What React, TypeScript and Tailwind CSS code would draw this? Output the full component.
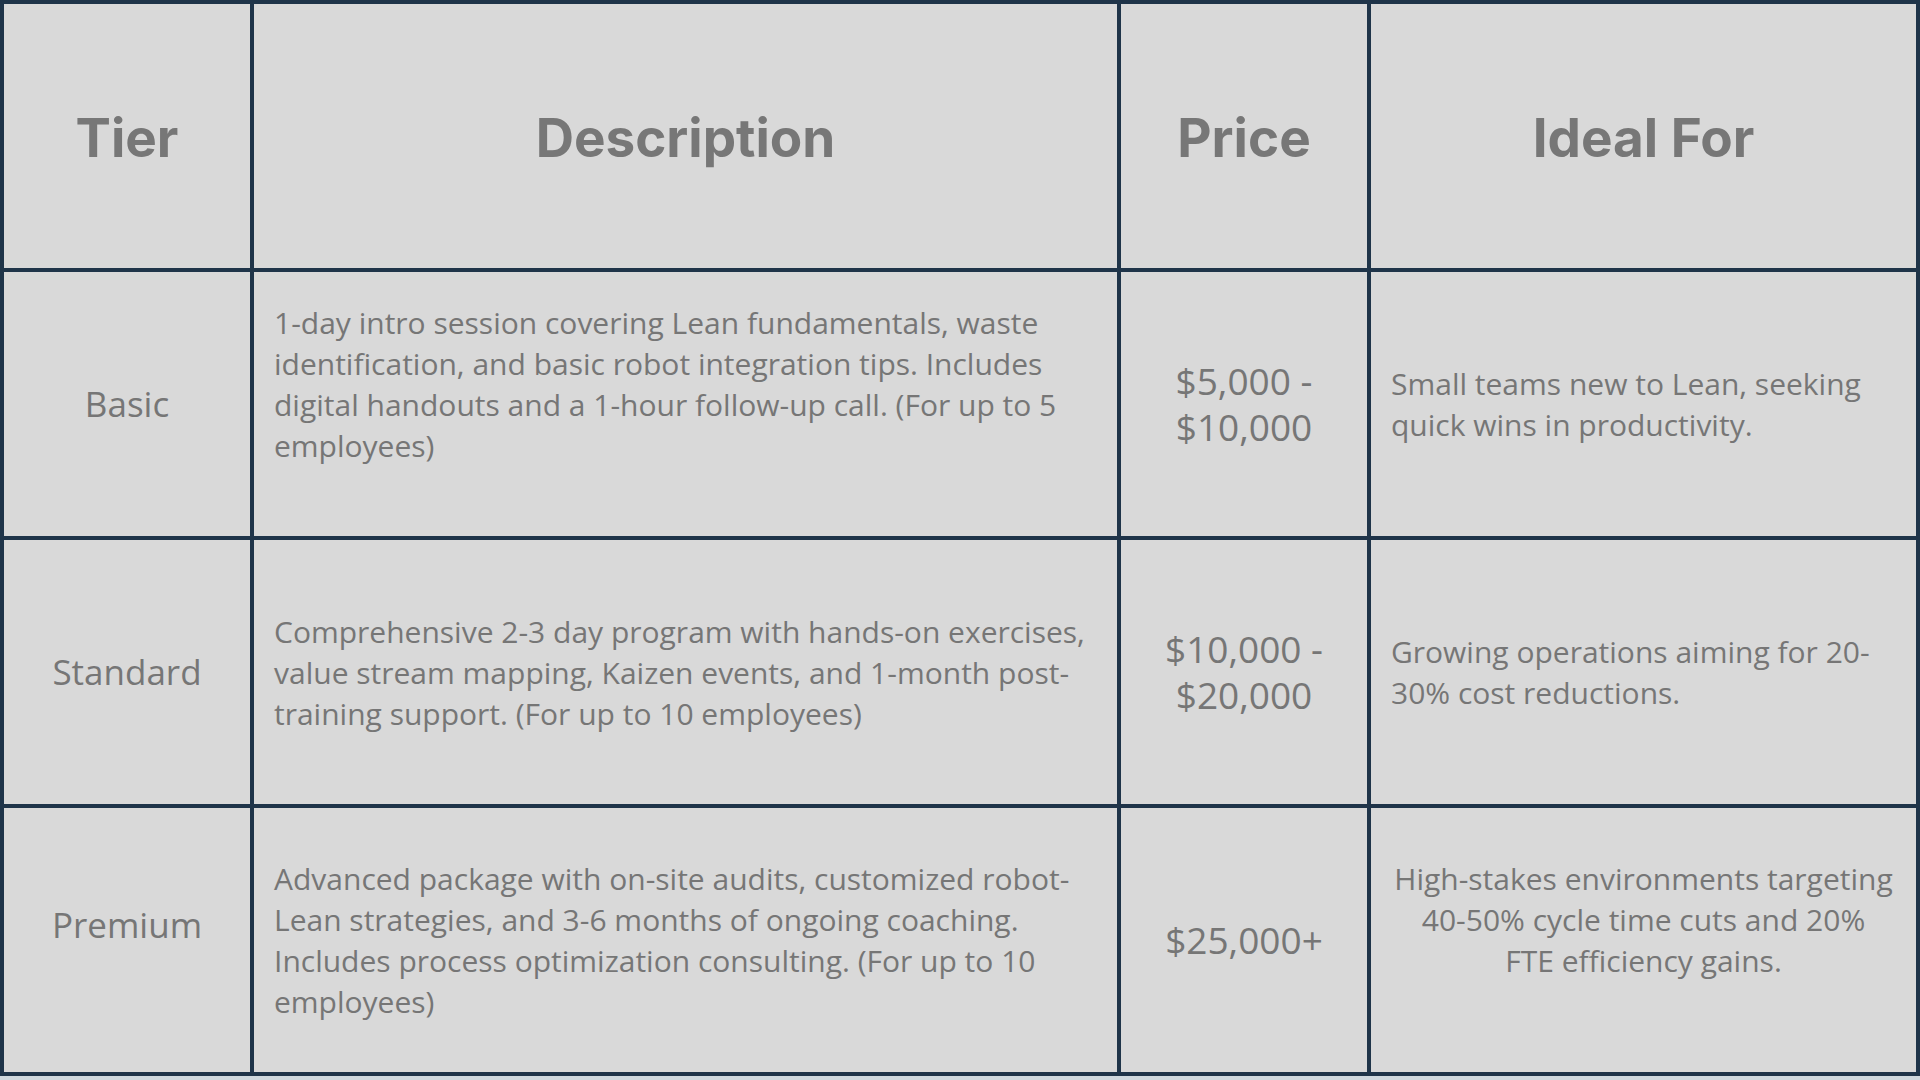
import React from "react";

type Row = {
  tier: string;
  tierPad?: string;
  desc: string[];
  descPad?: string;
  price: string[];
  ideal: string[];
  idealCenter?: boolean;
  idealPad?: string;
};

const rows: Row[] = [
  {
    tier: "Basic",
    desc: [
      "1-day intro session covering Lean fundamentals, waste",
      "identification, and basic robot integration tips. Includes",
      "digital handouts and a 1-hour follow-up call. (For up to 5",
      "employees)",
    ],
    descPad: "pb-[40px]",
    price: ["$5,000 -", "$10,000"],
    ideal: ["Small teams new to Lean, seeking", "quick wins in productivity."],
  },
  {
    tier: "Standard",
    desc: [
      "Comprehensive 2-3 day program with hands-on exercises,",
      "value stream mapping, Kaizen events, and 1-month post-",
      "training support. (For up to 10 employees)",
    ],
    price: ["$10,000 -", "$20,000"],
    ideal: ["Growing operations aiming for 20-", "30% cost reductions."],
  },
  {
    tier: "Premium",
    tierPad: "pb-[30px]",
    desc: [
      "Advanced package with on-site audits, customized robot-",
      "Lean strategies, and 3-6 months of ongoing coaching.",
      "Includes process optimization consulting. (For up to 10",
      "employees)",
    ],
    price: ["$25,000+"],
    ideal: [
      "High-stakes environments targeting",
      "40-50% cycle time cuts and 20%",
      "FTE efficiency gains.",
    ],
    idealCenter: true,
    idealPad: "pb-[42px]",
  },
];

const body = "font-['Open_Sans',sans-serif] text-[#767676]";

function Lines({ lines }: { lines: string[] }) {
  return (
    <>
      {lines.map((l, i) => (
        <span key={i} className="block whitespace-nowrap">
          {l}
        </span>
      ))}
    </>
  );
}

export default function App() {
  return (
    <div className="w-[1920px] h-[1080px] bg-[#cfd8de]">
      <div className="grid grid-cols-[246px_863px_246px_545px] grid-rows-[264px_264px_264px_264px] gap-[4px] border-[4px] border-[#1f3449] bg-[#1f3449] w-[1920px] h-[1076px]">
        {["Tier", "Description", "Price", "Ideal For"].map((h) => (
          <div
            key={h}
            className="bg-[#d9d9d9] flex items-center justify-center pt-[5px] font-['Inter',sans-serif] font-bold text-[53px] text-[#777777]"
          >
            {h}
          </div>
        ))}
        {rows.map((r) => (
          <React.Fragment key={r.tier}>
            <div
              className={`bg-[#d9d9d9] flex items-center justify-center text-[35px] ${body} ${r.tierPad ?? ""}`}
            >
              {r.tier}
            </div>
            <div
              className={`bg-[#d9d9d9] flex flex-col justify-center pl-[20px] text-[30px] leading-[41px] ${body} ${r.descPad ?? ""}`}
            >
              <Lines lines={r.desc} />
            </div>
            <div
              className={`bg-[#d9d9d9] flex flex-col items-center justify-center text-center text-[37px] leading-[46px] ${body}`}
            >
              <Lines lines={r.price} />
            </div>
            <div
              className={`bg-[#d9d9d9] flex flex-col justify-center text-[30px] leading-[41px] ${body} ${
                r.idealCenter ? "items-center text-center" : "pl-[20px]"
              } ${r.idealPad ?? ""}`}
            >
              <Lines lines={r.ideal} />
            </div>
          </React.Fragment>
        ))}
      </div>
    </div>
  );
}
